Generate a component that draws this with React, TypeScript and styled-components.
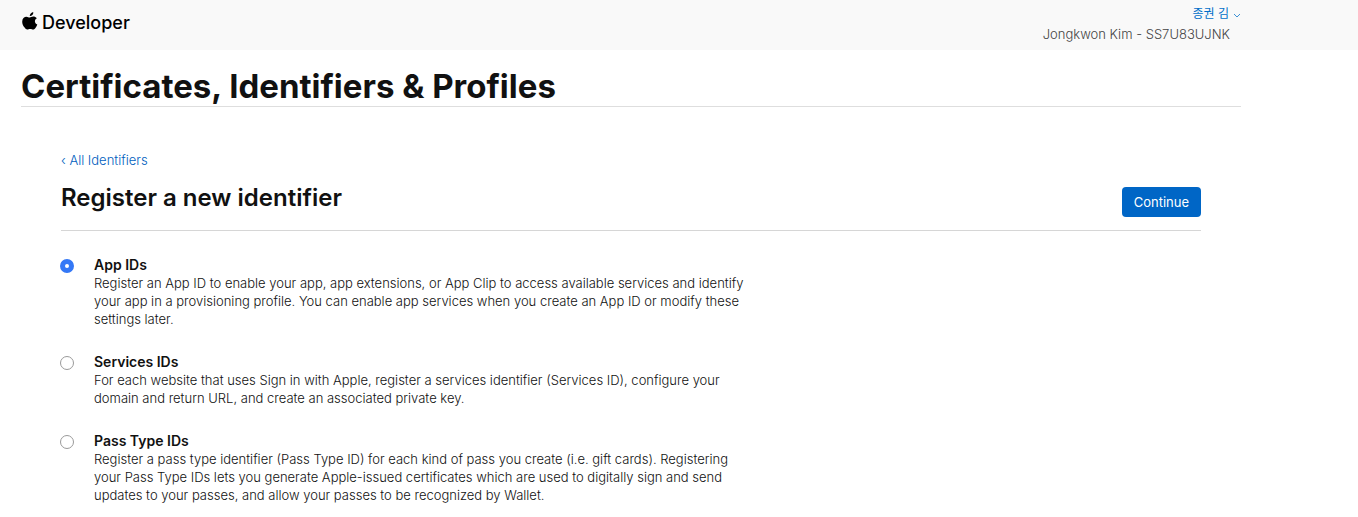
import React from "react";
import styled, { createGlobalStyle } from "styled-components";

const GlobalStyle = createGlobalStyle`
  * { box-sizing: border-box; }
  body {
    margin: 0;
    background: #fff;
    color: #111;
    font: 13px/18px Inter, "Noto Sans CJK KR", sans-serif;
    overflow-x: hidden;
  }
  h1, h2, p { margin: 0; }
`;

const Header = styled.header`
  background: #f9f9f9;
  padding: 0 117px 0 22px;
`;

const HeaderInner = styled.div`
  display: flex;
  justify-content: space-between;
  height: 50px;
`;

const Brand = styled.a`
  display: flex;
  align-items: center;
  gap: 4px;
  height: 46px;
  color: #000;
  font-size: 18px;
  font-weight: 500;
  text-decoration: none;
`;

const AppleMark = styled.svg`
  width: 16px;
  height: 18px;
  margin-bottom: 4px;
`;

const Account = styled.div`
  display: flex;
  flex-direction: column;
  align-items: flex-end;
  padding-top: 4px;
  line-height: 20px;
  color: #444;
`;

const AccountMenu = styled.button`
  display: flex;
  align-items: center;
  gap: 4px;
  padding: 0;
  border: 0;
  background: none;
  color: #0070c9;
  font: 12px/20px Inter, "Noto Sans CJK KR", sans-serif;
`;

const Chevron = styled.svg`
  width: 8px;
  height: 5px;
  margin-top: 2px;
  opacity: 0.75;
`;

const Team = styled.span`
  padding-right: 11px;
  font-weight: 300;
`;

const Main = styled.main`
  padding: 16px 117px 0 21px;
`;

const PageTitle = styled.h1`
  border-bottom: 1px solid #dedede;
  font-size: 33px;
  line-height: 40px;
  font-weight: 700;
`;

const Content = styled.section`
  padding: 44px 40px 0;
`;

const BackLink = styled.a`
  display: inline-block;
  color: #0060be;
  font-weight: 300;
  text-decoration: none;
`;

const SectionHead = styled.div`
  display: flex;
  justify-content: space-between;
  align-items: flex-end;
  margin-top: 10px;
  padding-bottom: 13px;
  border-bottom: 1px solid #d6d6d6;
`;

const SectionTitle = styled.h2`
  font-size: 24px;
  line-height: 38px;
  font-weight: 600;
`;

const Continue = styled.button`
  height: 30px;
  padding: 0 12px;
  border: 0;
  border-radius: 4px;
  background: #0066c6;
  color: #fff;
  font: 400 13px/18px Inter, sans-serif;
`;

const Options = styled.div`
  display: grid;
  gap: 25px;
  max-width: 689px;
  padding: 25px 0 12px;
`;

const Option = styled.div`
  display: flex;
  gap: 20px;
`;

const Radio = styled.input`
  appearance: none;
  flex: none;
  width: 14px;
  height: 14px;
  margin: 3px 0 0 -1px;
  border: 1px solid #9a9a9a;
  border-radius: 50%;
  background: #fff;
  &:checked {
    border: 5px solid #3478f6;
  }
`;

const OptionLabel = styled.label`
  display: block;
  font-size: 14px;
  font-weight: 600;
`;

const Description = styled.p`
  color: #111;
  font-weight: 300;
`;

const options = [
  {
    id: "app",
    title: "App IDs",
    text: "Register an App ID to enable your app, app extensions, or App Clip to access available services and identify your app in a provisioning profile. You can enable app services when you create an App ID or modify these settings later.",
  },
  {
    id: "services",
    title: "Services IDs",
    text: "For each website that uses Sign in with Apple, register a services identifier (Services ID), configure your domain and return URL, and create an associated private key.",
  },
  {
    id: "pass",
    title: "Pass Type IDs",
    text: "Register a pass type identifier (Pass Type ID) for each kind of pass you create (i.e. gift cards). Registering your Pass Type IDs lets you generate Apple-issued certificates which are used to digitally sign and send updates to your passes, and allow your passes to be recognized by Wallet.",
  },
];

export default function App() {
  return (
    <>
      <GlobalStyle />
      <Header>
        <HeaderInner>
          <Brand href="#">
            <AppleMark viewBox="0 0 16 18" aria-hidden="true">
              <path d="M11.300.2c.1 1.100-.3 2.100-1 2.800-.7.800-1.600 1.200-2.500 1.100-.1-1 .4-2 1-2.700C9.500.7 10.500.2 11.300.2Z" />
              <path d="M14.800 6.200c-1.300.8-1.900 1.800-1.900 3 0 1.500.9 2.700 2.400 3.300-.4 1.200-1 2.200-1.700 3.200-.7.900-1.400 1.900-2.500 1.900s-1.500-.7-2.900-.7-1.800.7-2.900.7c-1.100 0-1.900-1-2.700-2C1 13.700.2 11.700.2 9.700c0-3.200 2.100-5 4.300-5 1.200 0 2.200.8 3.200.8.8 0 2-.9 3.600-.9 1.300 0 2.600.5 3.500 1.600Z" />
            </AppleMark>
            Developer
          </Brand>
          <Account>
            <AccountMenu type="button">
              종권 김
              <Chevron viewBox="0 0 8 5" aria-hidden="true">
                <path d="M1 1 4 4 7 1" fill="none" stroke="currentColor" />
              </Chevron>
            </AccountMenu>
            <Team>Jongkwon Kim - SS7U83UJNK</Team>
          </Account>
        </HeaderInner>
      </Header>
      <Main>
        <PageTitle>Certificates, Identifiers &amp; Profiles</PageTitle>
        <Content>
          <BackLink href="#">‹ All Identifiers</BackLink>
          <SectionHead>
            <SectionTitle>Register a new identifier</SectionTitle>
            <Continue type="button">Continue</Continue>
          </SectionHead>
          <Options role="radiogroup" aria-label="Identifier type">
            {options.map((o, i) => (
              <Option key={o.id}>
                <Radio type="radio" name="identifier" id={o.id} defaultChecked={i === 0} />
                <div>
                  <OptionLabel htmlFor={o.id}>{o.title}</OptionLabel>
                  <Description>{o.text}</Description>
                </div>
              </Option>
            ))}
          </Options>
        </Content>
      </Main>
    </>
  );
}
